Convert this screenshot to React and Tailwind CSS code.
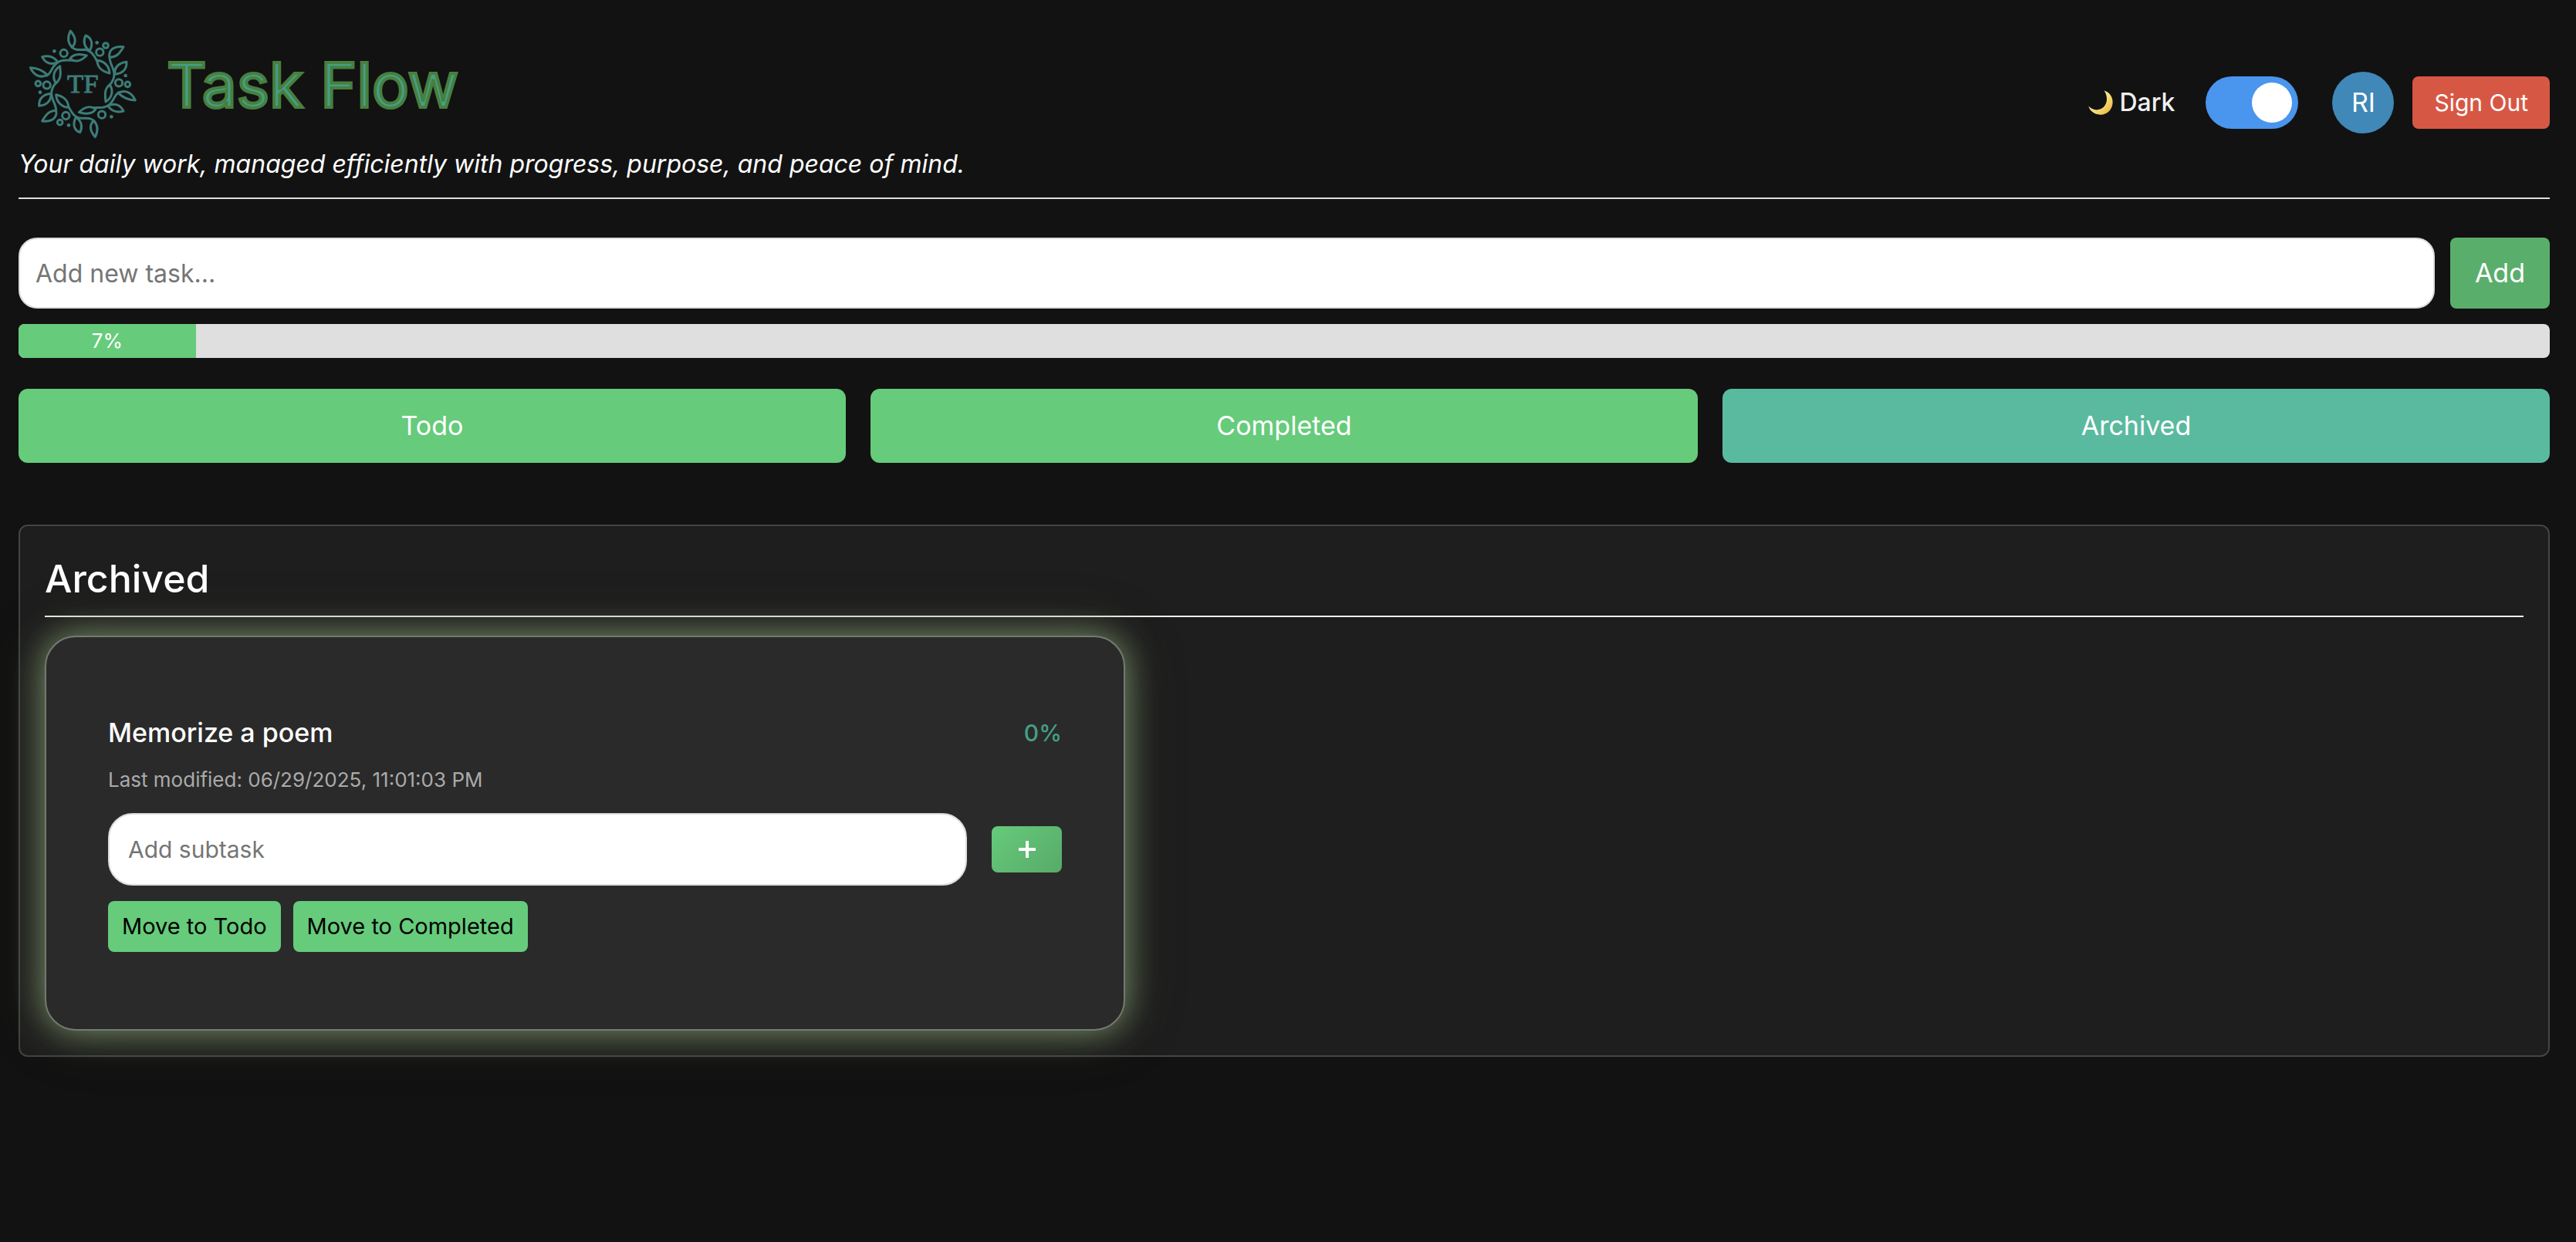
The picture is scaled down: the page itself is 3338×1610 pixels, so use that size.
import { useState } from 'react';

function WreathHalf() {
  return (
    <g>
      <path d="M214 63C201 90 203 110 220 127C240 105 232 85 214 63Z" />
      <path d="M218 125C232 140 250 136 268 136C297 140 306 160 318 182" />
      <path d="M289 140C265 125 263 100 273 81C298 90 302 115 289 140Z" />
      <path d="M318 178C345 180 365 200 366 228C338 222 318 205 318 178Z" />
      <path d="M366 166C360 135 385 122 420 125C405 150 395 165 366 166Z" />
      <path d="M366 164C365 190 383 205 384 232C384 255 374 266 364 276" />
      <path d="M386 232C385 203 400 188 432 184C433 210 420 228 386 232Z" />
      <path d="M367 272C345 290 348 310 351 339C372 325 384 300 367 272Z" />
      <path d="M400 305C420 325 440 332 466 333C455 308 430 288 400 305Z" />
      <path d="M402 302C380 315 385 340 357 355C340 366 325 360 303 362" />
      <path d="M359 354C375 378 395 382 420 375C408 350 385 342 359 354Z" />
      <path d="M312 368C290 350 265 362 247 380C275 388 300 385 312 368Z" />
      <circle cx="188" cy="150" r="14" />
      <circle cx="328" cy="146" r="14" />
      <circle cx="402" cy="265" r="14" />
      <circle cx="351" cy="120" r="10" />
      <circle cx="436" cy="271" r="10" />
      <g fill="currentColor" stroke="none">
        <circle cx="151" cy="142" r="7" />
        <circle cx="317" cy="109" r="7" />
        <circle cx="428" cy="237" r="7" />
      </g>
    </g>
  );
}

function Logo() {
  return (
    <svg viewBox="12 33 480 480" className="size-40 shrink-0 text-[#3c7c78]" role="img" aria-label="TF">
      <g fill="none" stroke="currentColor" strokeWidth="9" strokeLinejoin="round" strokeLinecap="round">
        <WreathHalf />
        <g transform="rotate(180 262 269.5)">
          <WreathHalf />
        </g>
      </g>
      <text
        x="262"
        y="302"
        textAnchor="middle"
        fill="currentColor"
        stroke="currentColor"
        strokeWidth="3"
        className="font-['Liberation_Serif',serif] text-[104px]"
      >
        TF
      </text>
    </svg>
  );
}

function Moon() {
  return (
    <svg viewBox="0 0 32 32" className="size-8" aria-hidden="true">
      <defs>
        <linearGradient id="moon" x1="0" y1="0" x2="1" y2="1">
          <stop offset="0.3" stopColor="#fdf0a0" />
          <stop offset="0.65" stopColor="#f4d668" />
          <stop offset="1" stopColor="#dfa93c" />
        </linearGradient>
      </defs>
      <path d="M20.5 0.3C28 3 32 9 31.6 16.500C31 25.500 24 32 15.500 31.700C8 31.400 2 27 0.300 20.600C4 25 10 26.500 15.500 24.600C24 21.500 27 10 20.500 0.300Z" fill="url(#moon)" />
    </svg>
  );
}

const TABS = ['Todo', 'Completed', 'Archived'];

export default function App() {
  const [dark, setDark] = useState(true);
  const [active, setActive] = useState('Archived');
  const progress = 7;

  return (
    <div className="min-h-screen bg-[#121212] pt-[30px] pr-[34px] pb-6 pl-6 font-['Inter',sans-serif] text-[32px] leading-[48px] text-white">
      <header className="flex items-center justify-between border-b-2 border-[#dfdfdc] pb-5">
        <div>
          <div className="flex items-center gap-8">
            <Logo />
            <h1 className="text-[80px] leading-[120px] font-normal text-[#459e86] [-webkit-text-stroke:4px_#487f3e]">
              Task Flow
            </h1>
          </div>
          <p className="leading-[46px] italic">
            Your daily work, managed efficiently with progress, purpose, and peace of mind.
          </p>
        </div>
        <div className="flex items-center">
          <label htmlFor="theme" className="mr-10 flex items-center gap-2 font-medium text-[#f0f0f0]">
            <Moon />
            Dark
          </label>
          <input
            id="theme"
            type="checkbox"
            role="switch"
            checked={dark}
            onChange={() => setDark(!dark)}
            className="mr-11 flex h-[68px] w-[120px] appearance-none items-center rounded-full bg-gray-400 px-2 before:size-[52px] before:rounded-full before:bg-white checked:justify-end checked:bg-[#4a95ed]"
          />
          <div className="mr-6 flex size-20 items-center justify-center rounded-full bg-[#3f88b8] text-[34px]">RI</div>
          <button className="h-[68px] rounded-lg bg-[#d75745] px-7 text-[30px]">Sign Out</button>
        </div>
      </header>

      <main>
        <form className="mt-[50px] flex gap-5" onSubmit={(e) => e.preventDefault()}>
          <input
            type="text"
            aria-label="Add new task"
            placeholder="Add new task..."
            className="h-[92px] min-w-0 flex-1 rounded-3xl border-2 border-[#dcdcdc] bg-white px-5 text-black placeholder:text-[#757575]"
          />
          <button className="rounded-lg bg-[#5aae6c] px-8 text-[34px]">Add</button>
        </form>

        <div
          className="mt-5 h-11 overflow-hidden rounded-lg bg-[#dfdfdf]"
          role="progressbar"
          aria-label="Progress"
          aria-valuenow={progress}
        >
          <div
            className="flex h-full items-center justify-center bg-[#66cb7b] text-[26px]"
            style={{ width: `${progress}%` }}
          >
            {progress}%
          </div>
        </div>

        <nav className="mt-10 grid grid-cols-3 gap-8 text-[34px]">
          {TABS.map((tab) => (
            <button
              key={tab}
              onClick={() => setActive(tab)}
              className={`h-24 rounded-xl ${tab === active ? 'bg-[#5aba9f]' : 'bg-[#66cb7b]'}`}
            >
              {tab}
            </button>
          ))}
        </nav>

        <section className="mt-20 rounded-xl border-2 border-[#444444] bg-[#1e1e1e] p-8">
          <h2 className="border-b-2 border-[#f0f0ea] pb-3 text-[50px] leading-[72px] font-medium">{active}</h2>
          <article className="mt-6 w-[1400px] max-w-full rounded-[40px] border-2 border-[#747a70] bg-[#2a2a2a] px-20 py-[100px] shadow-[0_0_44px_rgba(128,152,112,0.95),0_0_80px_rgba(70,75,50,0.3)]">
            <div className="flex items-center justify-between">
              <h3 className="text-[34px] font-medium">Memorize a poem</h3>
              <span className="text-[30px] font-medium text-[#459e86]">0%</span>
            </div>
            <p className="mt-4 text-[26px] leading-[42px] text-[#aaaaaa]">Last modified: 06/29/2025, 11:01:03 PM</p>
            <form className="mt-[22px] flex items-center gap-8" onSubmit={(e) => e.preventDefault()}>
              <input
                type="text"
                aria-label="Add subtask"
                placeholder="Add subtask"
                className="h-[94px] min-w-0 flex-1 rounded-[32px] border-2 border-[#dcdcdc] bg-white px-6 text-[30px] text-black placeholder:text-[#757575]"
              />
              <button
                aria-label="Add subtask"
                className="flex h-[60px] w-[91px] items-center justify-center rounded-lg bg-linear-135 from-[#66cb7b] to-[#58aa69]"
              >
                <svg viewBox="0 0 22 22" className="size-[22px]" stroke="currentColor" strokeWidth="4" aria-hidden="true">
                  <path d="M11 0V22M0 11H22" />
                </svg>
              </button>
            </form>
            <div className="mt-5 flex gap-4 text-[29px] text-black">
              <button className="h-[66px] rounded-lg bg-[#66cb7b] px-[18px]">Move to Todo</button>
              <button className="h-[66px] rounded-lg bg-[#66cb7b] px-[18px]">Move to Completed</button>
            </div>
          </article>
        </section>
      </main>
    </div>
  );
}
